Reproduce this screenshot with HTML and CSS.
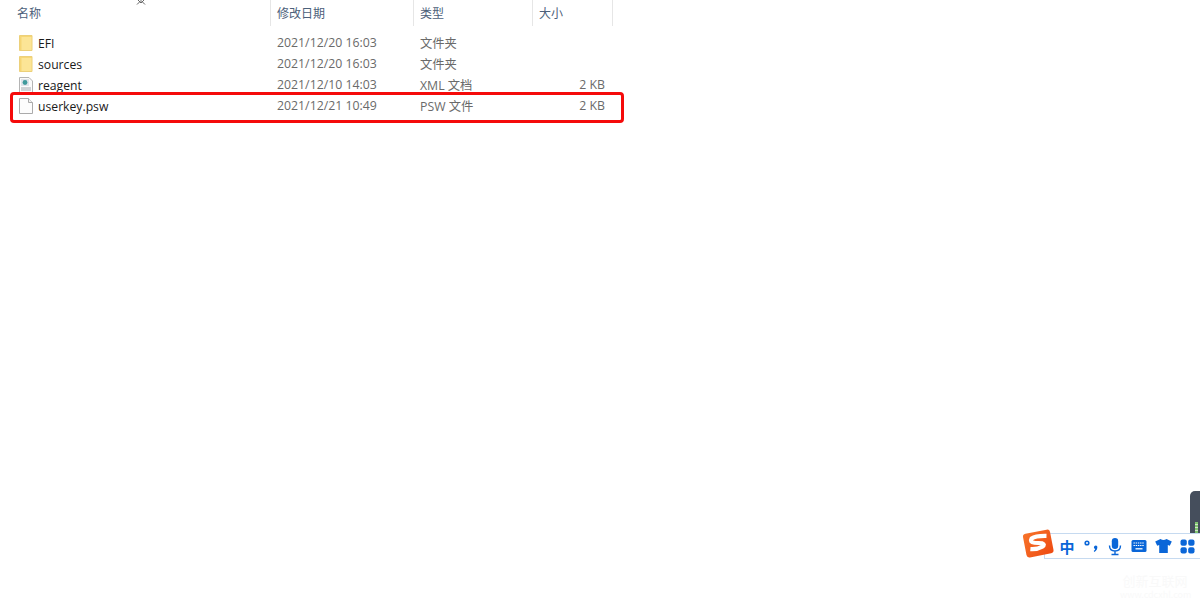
FILE: index.html
```html
<!DOCTYPE html>
<html lang="zh">
<head>
<meta charset="utf-8">
<title>文件列表</title>
<link rel="stylesheet" href="styles.css">
</head>
<body>
<div class="explorer">
  <svg class="sort-arrow" width="10" height="6" viewBox="0 0 10 6"><path d="M1 0 L5 4 L9 0 M1 5.500 L5 1.500 M9 5.500 L5 1.500" fill="none" stroke="#666" stroke-width="1"/></svg>
  <div class="head">
    <div class="hcell">名称</div>
    <div class="hcell">修改日期</div>
    <div class="hcell">类型</div>
    <div class="hcell">大小</div>
  </div>
  <div class="rows">
    <div class="row">
      <div class="name"><svg class="ficon" width="16" height="18" viewBox="0 0 16 18"><use href="#folder"/></svg><span class="label">EFI</span></div>
      <div class="cell">2021/12/20 16:03</div><div class="cell">文件夹</div><div class="cell size"></div>
    </div>
    <div class="row">
      <div class="name"><svg class="ficon" width="16" height="18" viewBox="0 0 16 18"><use href="#folder"/></svg><span class="label">sources</span></div>
      <div class="cell">2021/12/20 16:03</div><div class="cell">文件夹</div><div class="cell size"></div>
    </div>
    <div class="row">
      <div class="name"><svg class="ficon" width="16" height="18" viewBox="0 0 16 18">
        <path d="M1.500 1.500H11L14.500 5V16.500H1.500Z" fill="#fbfbfb" stroke="#b4b4b4"/>
        <rect x="3" y="3" width="8" height="7" fill="#dfe3ea"/>
        <circle cx="7" cy="6.500" r="2.400" fill="#3f9a9c"/>
        <path d="M3 12H13M3 14H13" stroke="#a4a9b0"/>
      </svg><span class="label">reagent</span></div>
      <div class="cell">2021/12/10 14:03</div><div class="cell">XML 文档</div><div class="cell size">2 KB</div>
    </div>
    <div class="row">
      <div class="name"><svg class="ficon" width="16" height="18" viewBox="0 0 16 18">
        <path d="M1.500 1.500H10.500L14.500 5.500V16.500H1.500Z" fill="#fdfdfd" stroke="#ababab"/>
        <path d="M10.500 1.500V5.500H14.500" fill="#f2f2f2" stroke="#ababab"/>
      </svg><span class="label">userkey.psw</span></div>
      <div class="cell">2021/12/21 10:49</div><div class="cell">PSW 文件</div><div class="cell size">2 KB</div>
    </div>
  </div>
  <div class="highlight"></div>
</div>

<div class="widget"><div class="widget-level"></div></div>

<div class="ime">
  <svg class="ime-logo" width="33" height="31" viewBox="0 0 33 31">
    <defs>
      <linearGradient id="logo-fill" x1="0" y1="0" x2="1" y2="1">
        <stop offset="0" stop-color="#f7742a"/>
        <stop offset="1" stop-color="#ee4a12"/>
      </linearGradient>
    </defs>
    <rect x="2.500" y="3.500" width="27.500" height="24" rx="3" fill="url(#logo-fill)" transform="rotate(-11 16.500 15.500)"/>
    <path d="M25 8.500 Q14 7.500 10 10 Q7.500 13.500 12.500 14.500 L20 15.500 Q23.500 17 20 19 Q15 21.500 8 20.500" fill="none" stroke="#fff" stroke-width="4.200" transform="rotate(-4 16.500 15.500)"/>
  </svg>
  <div class="ime-bar">
    <span class="ime-item ime-zh">中</span>
    <span class="ime-item"><svg width="16" height="16" viewBox="0 0 16 16"><circle cx="4" cy="5" r="1.800" fill="none" stroke="#0a66d8" stroke-width="1.600"/><path d="M11.500 8 a2 2 0 0 1 2.800 0.500 q0.500 3 -2.800 5.500 l-.8 -1 q1.300 -1 1.500 -2 a2 2 0 0 1 -0.700 -3Z" fill="#0a66d8"/></svg></span>
    <span class="ime-item"><svg width="16" height="19" viewBox="0 0 16 19"><rect x="4.800" y="1" width="6.400" height="11" rx="3.200" fill="#0a66d8"/><path d="M2.500 8.500 q0 5.500 5.500 5.500 t5.500 -5.500 M8 14 v3 M4.500 17.500 h7" fill="none" stroke="#0a66d8" stroke-width="1.400"/></svg></span>
    <span class="ime-item"><svg width="16" height="14" viewBox="0 0 16 14"><rect x="0.500" y="1" width="15" height="12" rx="1.500" fill="#0a66d8"/><path d="M2.500 4 h11 M2.500 6.500 h11" stroke="#fff" stroke-width="1.100" stroke-dasharray="1.400 0.800"/><path d="M4.500 9.800 h7" stroke="#fff" stroke-width="1.300"/></svg></span>
    <span class="ime-item"><svg width="17" height="16" viewBox="0 0 17 16"><path d="M5.500 1 Q8.500 3 11.500 1 L16.800 3.500 L14.800 7.800 L12.800 7 V15 H4.200 V7 L2.200 7.800 L0.200 3.500Z" fill="#0a66d8"/></svg></span>
    <span class="ime-item"><svg width="15" height="15" viewBox="0 0 15 15"><rect x="0.500" y="0.500" width="6.300" height="6.300" rx="2" fill="#0a66d8"/><rect x="8.200" y="0.500" width="6.300" height="6.300" rx="2" fill="#0a66d8"/><rect x="0.500" y="8.200" width="6.300" height="6.300" rx="2" fill="#0a66d8"/><rect x="8.200" y="8.200" width="6.300" height="6.300" rx="2" fill="#0a66d8"/></svg></span>
  </div>
</div>

<div class="watermark"><div class="wm-1">创新互联网</div><div class="wm-2">www.cdcxhl.com</div></div>

<svg class="defs" width="0" height="0">
  <defs>
    <g id="folder">
      <path d="M1.500 1.500 H14 V16.500 H1.500 Z" fill="#f6d675" stroke="#ecd07a"/>
      <rect x="3.500" y="3" width="10" height="13" fill="#fce596"/>
    </g>
  </defs>
</svg>
</body>
</html>
```

FILE: styles.css
```css
* { box-sizing: border-box; }
html, body { margin: 0; height: 100%; background: #fff; overflow: hidden; }
body { font-family: "Microsoft YaHei", "Noto Sans CJK SC", sans-serif; position: relative; }

.explorer { position: relative; width: 640px; }
.sort-arrow { position: absolute; left: 136px; top: -1px; }

.head { display: grid; grid-template-columns: 271px 143px 119px 80px; height: 26px; }
.hcell {
  font-size: 12px; line-height: 26px; color: #4c607a; padding-left: 6px;
  border-right: 1px solid #e6e6e6;
}
.hcell:first-child { padding-left: 17px; }

.rows { padding-top: 6px; }
.row {
  display: grid; grid-template-columns: 271px 143px 119px 80px; height: 21px; align-items: center;
}
.name { display: flex; align-items: center; padding-left: 18px; font-size: 12.200px; color: #1a1a1a; font-family: "Open Sans", "Noto Sans CJK SC", sans-serif; }
.label { padding-top: 2px; }
.ficon { flex: none; margin-right: 4px; }
.cell { font-size: 12.300px; color: #6a6a6a; padding-left: 6px; font-family: "Open Sans", "Noto Sans CJK SC", sans-serif; white-space: nowrap; }
.size { text-align: right; padding-right: 8px; padding-left: 0; }

.highlight {
  position: absolute; left: 10px; top: 92px; width: 614px; height: 31px;
  border: 3px solid #f50a0a; border-radius: 4px;
}

.widget {
  position: absolute; left: 1190px; top: 491px; width: 10px; height: 42px;
  background: #454e5c; border-radius: 5px 0 0 0;
  display: flex; flex-direction: column; justify-content: flex-end; padding-left: 5px; padding-right: 2px;
}
.widget-level {
  height: 11px;
  background: repeating-linear-gradient(to bottom, #7fc46f 0 2px, #cfe6c4 2px 3px);
}

.ime { position: absolute; left: 1022px; top: 528px; width: 178px; height: 31px; }
.ime-logo { position: absolute; left: 0; top: 0; z-index: 1; }
.ime-bar {
  position: absolute; left: 22px; top: 5px; width: 156px; height: 26px;
  background: #fff; border: 1px solid #c6daf0; border-right: 0;
  display: flex; align-items: center; padding-left: 10px;
}
.ime-item { flex: none; width: 24px; display: flex; align-items: center; justify-content: center; }
.ime-zh { font-size: 15px; font-weight: 700; color: #0a66d8; line-height: 1; }

.watermark { position: absolute; left: 1120px; top: 573px; width: 70px; text-align: center; color: #f9f9f9; }
.wm-1 { font-size: 13px; line-height: 16px; white-space: nowrap; }
.wm-2 { font-size: 9px; line-height: 12px; white-space: nowrap; }
.defs { position: absolute; }
```
